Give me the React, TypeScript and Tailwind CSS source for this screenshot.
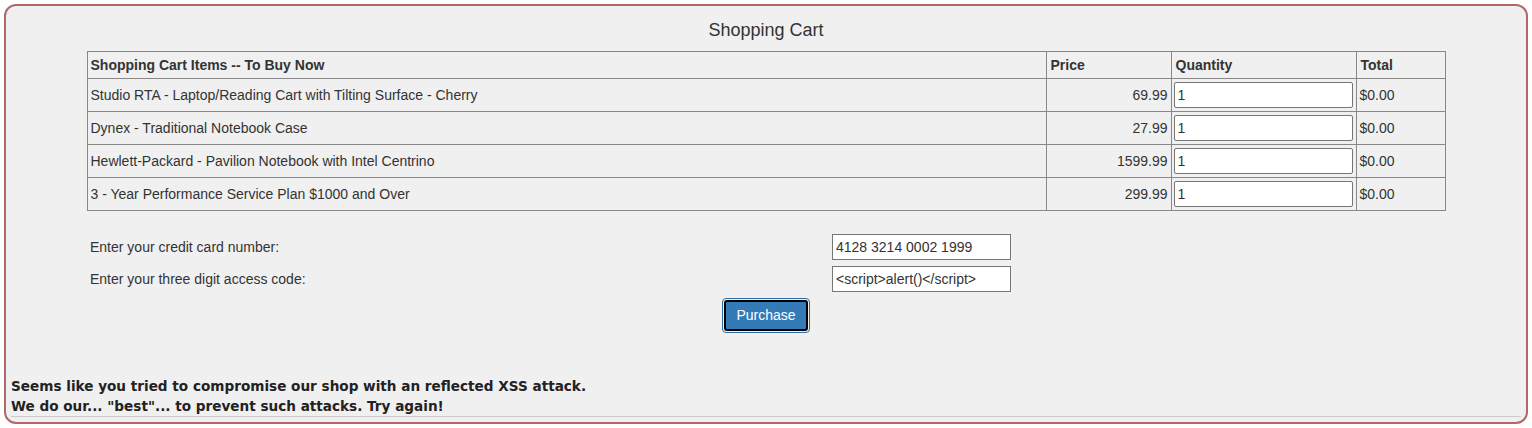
import React from "react";

const items = [
  { name: "Studio RTA - Laptop/Reading Cart with Tilting Surface - Cherry", price: "69.99" },
  { name: "Dynex - Traditional Notebook Case", price: "27.99" },
  { name: "Hewlett-Packard - Pavilion Notebook with Intel Centrino", price: "1599.99" },
  { name: "3 - Year Performance Service Plan $1000 and Over", price: "299.99" },
];

export default function App() {
  return (
    <div className="w-[1532px] h-[428px] bg-white p-[4px] text-[#333] text-[14px]" style={{ fontFamily: '"Liberation Sans", Arial, sans-serif' }}>
      <div className="h-[420px] border-2 border-[#b06868] rounded-[12px] bg-[#f0f0f0] flex flex-col">
        <div className="pt-[12px] h-[45px] text-center text-[18px] leading-[24px]">Shopping Cart</div>
        <table className="w-[1359px] mx-auto border-collapse">
          <thead>
            <tr className="h-[27px]">
              <th className="border border-[#888] text-left font-bold px-[3px] py-0 w-[959px]">Shopping Cart Items -- To Buy Now</th>
              <th className="border border-[#888] text-left font-bold px-[4px] py-0 w-[125px]">Price</th>
              <th className="border border-[#888] text-left font-bold px-[4px] py-0 w-[185px]">Quantity</th>
              <th className="border border-[#888] text-left font-bold px-[4px] py-0">Total</th>
            </tr>
          </thead>
          <tbody>
            {items.map((it) => (
              <tr key={it.name} className="h-[33px]">
                <td className="border border-[#888] px-[3px] py-0">{it.name}</td>
                <td className="border border-[#888] px-[3px] py-0 text-right">{it.price}</td>
                <td className="border border-[#888] px-[2px] py-0">
                  <input
                    defaultValue="1"
                    className="block w-[179px] h-[26px] bg-white border border-[#767676] rounded-[2px] px-[3px] text-[14px] text-[#333] outline-none"
                  />
                </td>
                <td className="border border-[#888] px-[3px] py-0">$0.00</td>
              </tr>
            ))}
          </tbody>
        </table>
        <div className="mt-[23px] ml-[84px] flex flex-col gap-[6px]">
          <div className="flex items-center">
            <span className="w-[742px]">Enter your credit card number:</span>
            <input
              defaultValue="4128 3214 0002 1999"
              className="w-[179px] h-[26px] bg-white border border-[#767676] px-[3px] text-[14px] text-[#333] outline-none"
            />
          </div>
          <div className="flex items-center">
            <span className="w-[742px]">Enter your three digit access code:</span>
            <input
              defaultValue="<script>alert()</script>"
              className="w-[179px] h-[26px] bg-white border border-[#767676] px-[3px] text-[14px] text-[#333] outline-none"
            />
          </div>
        </div>
        <div className="mt-[6px] flex justify-center">
          <div className="rounded-[4px] border border-[#2e6da4] p-px">
            <button className="block h-[31px] px-[10px] bg-[#337ab7] text-white text-[14px] border-2 border-black rounded-[3px]">Purchase</button>
          </div>
        </div>
        <div className="mt-[43px] px-[5px] font-bold text-[13.6px] leading-[20px] text-[#222]" style={{ fontFamily: '"DejaVu Sans", Verdana, sans-serif' }}>
          <div>Seems like you tried to compromise our shop with an reflected XSS attack.</div>
          <div>We do our... "best"... to prevent such attacks. Try again!</div>
        </div>
        <div className="mx-[5px] border-t border-[#ccc]" />
      </div>
    </div>
  );
}
